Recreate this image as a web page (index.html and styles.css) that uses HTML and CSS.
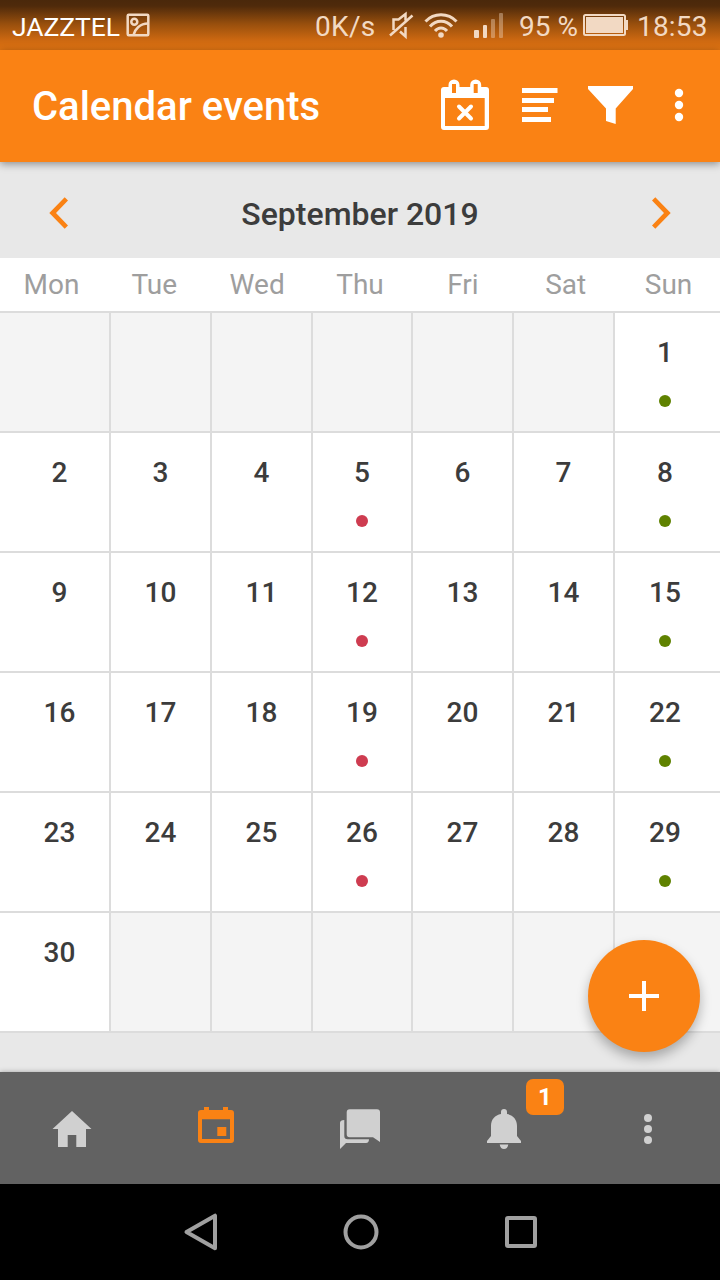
FILE: index.html
```html
<!DOCTYPE html>
<html lang="en">
<head>
    <meta charset="UTF-8">
    <title>Calendar events</title>
    <link rel="stylesheet" href="styles.css">
</head>
<body>
    <div id="container">
        <div id="status">
            <span class="carrier">JAZZTEL</span>
            <svg class="st-pic" width="24" height="24" viewBox="0 0 24 24">
                <rect x="1.7" y="1.7" width="20.6" height="20.6" rx="1"/>
                <circle cx="8.3" cy="8.7" r="3"/>
                <path d="M7.5 22C9 16 14 10.500 22 10.500"/>
            </svg>
            <span class="speed">0K/s</span>
            <svg class="st-mute" width="26" height="28" viewBox="0 0 26 28">
                <path d="M2 24.500L24.500 4.500M5.500 19V8.500H10.500L17.500 3V9.500M17.500 16V25.500L12 20.500"/>
            </svg>
            <svg class="st-wifi" width="36" height="28" viewBox="0 0 36 28">
                <path d="M2.500 10.500C11 1.500 25 1.500 33.500 10.500M7 15.500C13 8.500 23 8.500 29 15.500M12 20C15.500 16 20.500 16 24 20"/>
                <circle cx="18" cy="24" r="2.800"/>
            </svg>
            <svg class="st-signal" width="30" height="26" viewBox="0 0 30 26">
                <rect x="0" y="18" width="5" height="8" rx="1"/>
                <rect x="9" y="13" width="4" height="13" rx="1"/>
                <rect class="off" x="17" y="7" width="4" height="19" rx="1"/>
                <rect class="off" x="25" y="1" width="4" height="25" rx="1"/>
            </svg>
            <span class="percent">95 %</span>
            <svg class="st-battery" width="46" height="22" viewBox="0 0 46 22">
                <rect class="case" x="1" y="1" width="41" height="20" rx="1.500"/>
                <rect x="3" y="3" width="37" height="16"/>
                <rect x="43" y="6" width="2" height="10"/>
            </svg>
            <span class="clock">18:53</span>
        </div>
        <div id="header">
            <h1>Calendar events</h1>
            <svg class="ic-cancel" width="48" height="52" viewBox="0 0 48 52">
                <path fill-rule="evenodd" d="M3 8H7.500V6A5.500 5.500 0 0 1 18.500 6V8H29.200V6A5.500 5.500 0 0 1 40.200 6V8H45A3 3 0 0 1 48 11V48A3 3 0 0 1 45 51H3A3 3 0 0 1 0 48V11A3 3 0 0 1 3 8ZM4 19V47H43.700V19ZM11 5V14H15V5ZM32.700 5V14H36.700V5Z"/>
                <path class="cross" d="M18 27.500L30 39.500M30 27.500L18 39.500"/>
            </svg>
            <svg class="ic-lines" width="36" height="34" viewBox="0 0 36 34">
                <path d="M0 0H35.500V5H0ZM0 10H32V15H0ZM0 19H26V24H0ZM0 29H29V34H0Z"/>
            </svg>
            <svg class="ic-filter" width="46" height="38" viewBox="0 0 46 38">
                <path d="M0 0H45V3L27.700 22.500V38L18 35V22.500L0 3Z"/>
            </svg>
            <svg class="ic-more" width="10" height="34" viewBox="0 0 10 34">
                <circle cx="5" cy="5" r="4.200"/>
                <circle cx="5" cy="17" r="4.200"/>
                <circle cx="5" cy="29" r="4.200"/>
            </svg>
        </div>
        <div id="month">
            <svg width="19" height="32" viewBox="0 0 19 32"><path d="M.3 16L15.700 .3L19 3.600L7 16L19 28.400L15.700 31.700Z"/></svg>
            <h2>September 2019</h2>
            <svg width="19" height="32" viewBox="0 0 19 32"><path d="M18.700 16L3.300 .3L0 3.600L12 16L0 28.400L3.300 31.700Z"/></svg>
        </div>
        <ul id="week">
            <li>Mon</li>
            <li>Tue</li>
            <li>Wed</li>
            <li>Thu</li>
            <li>Fri</li>
            <li>Sat</li>
            <li>Sun</li>
        </ul>
        <ul id="days">
            <li class="empty"></li>
            <li class="empty"></li>
            <li class="empty"></li>
            <li class="empty"></li>
            <li class="empty"></li>
            <li class="empty"></li>
            <li>1<i class="green"></i></li>
            <li>2</li>
            <li>3</li>
            <li>4</li>
            <li>5<i class="red"></i></li>
            <li>6</li>
            <li>7</li>
            <li>8<i class="green"></i></li>
            <li>9</li>
            <li>10</li>
            <li>11</li>
            <li>12<i class="red"></i></li>
            <li>13</li>
            <li>14</li>
            <li>15<i class="green"></i></li>
            <li>16</li>
            <li>17</li>
            <li>18</li>
            <li>19<i class="red"></i></li>
            <li>20</li>
            <li>21</li>
            <li>22<i class="green"></i></li>
            <li>23</li>
            <li>24</li>
            <li>25</li>
            <li>26<i class="red"></i></li>
            <li>27</li>
            <li>28</li>
            <li>29<i class="green"></i></li>
            <li>30</li>
            <li class="empty"></li>
            <li class="empty"></li>
            <li class="empty"></li>
            <li class="empty"></li>
            <li class="empty"></li>
            <li class="empty"></li>
        </ul>
        <div id="add">
            <svg width="30" height="30" viewBox="0 0 30 30"><path d="M13 0H17V13H30V17H17V30H13V17H0V13H13Z"/></svg>
        </div>
        <ul id="tabs">
            <li>
                <svg width="40" height="42" viewBox="0 0 40 42"><path d="M20 3L39.500 21H34V39H24.300V27H15.700V39H6V21H.5Z"/></svg>
            </li>
            <li class="active">
                <svg width="36" height="42" viewBox="0 0 36 42"><path fill-rule="evenodd" d="M6 -1H11V2H25V-1H30V2H33A3 3 0 0 1 36 5V32A3 3 0 0 1 33 35H3A3 3 0 0 1 0 32V5A3 3 0 0 1 3 2H6ZM4 11.300V31H32V11.300ZM19.300 19H28.300V28H19.300Z"/></svg>
            </li>
            <li>
                <svg width="40" height="42" viewBox="0 0 40 42"><path d="M9.700 1.300H37A3 3 0 0 1 40 4.300V34L33 29.300H9.700A3 3 0 0 1 6.700 26.300V4.300A3 3 0 0 1 9.700 1.300ZM4.300 12V28Q4.300 31.300 7.600 31.300H29Q29 35 26 35H6L0 41V15Q0 12 4.300 12Z"/></svg>
            </li>
            <li>
                <svg width="34" height="42" viewBox="0 0 34 42"><path d="M14 6V4A3 3 0 0 1 20 4V6C26 7 30 11.500 30 18V28L34 33V35H0V33L4 28V18C4 11.500 8 7 14 6ZM12.700 36.500H21.300Q20.500 41 17 41Q13.500 41 12.700 36.500Z"/></svg>
                <span class="badge">1</span>
            </li>
            <li>
                <svg width="10" height="42" viewBox="0 0 10 42"><circle cx="5" cy="10" r="4"/><circle cx="5" cy="21" r="4"/><circle cx="5" cy="32" r="4"/></svg>
            </li>
        </ul>
        <div id="sysnav">
            <svg width="36" height="40" viewBox="0 0 36 40"><path d="M3.500 20L32 3.700V36.300Z"/></svg>
            <svg width="36" height="40" viewBox="0 0 36 40"><circle cx="18" cy="20" r="15.500"/></svg>
            <svg width="36" height="40" viewBox="0 0 36 40"><rect x="4" y="6" width="28" height="28" rx="1"/></svg>
        </div>
    </div>
</body>
</html>
```
FILE: styles.css
```css
*{
    padding: 0;
    margin: 0;
    box-sizing: border-box;
}
ul{
    list-style: none;
}
svg{
    display: block;
    flex: none;
    overflow: visible;
}
#container{
    width: 720px;
    height: 1280px;
    display: flex;
    flex-direction: column;
    position: relative;
    overflow: hidden;
    background: #e8e8e8;
    font-family: Roboto, "Liberation Sans", sans-serif;
}
/* status bar */
#status{
    height: 50px;
    padding-left: 12px;
    display: flex;
    align-items: center;
    background: linear-gradient(#4a280b 0, #4f2a0b 12%, #984f0d 48%, #cc6811 80%, #e07413 100%);
    color: #f2d9c3;
    font-size: 28px;
    line-height: 50px;
    white-space: nowrap;
}
#status span{
    flex: none;
    padding-top: 3px;
}
#status svg{
    fill: #f2d9c3;
}
#status .carrier{
    width: 114px;
    color: #fff;
    font-size: 26.5px;
    letter-spacing: -0.1px;
}
#status .st-pic,#status .st-mute{
    fill: none;
    stroke: #f2d9c3;
    stroke-width: 2.5;
}
#status .speed{
    width: 72px;
    margin-left: 165px;
    letter-spacing: 0.3px;
}
#status .st-mute{
    margin-left: 1px;
}
.st-wifi{
    margin-left: 9px;
}
.st-wifi path{
    fill: none;
    stroke: #f2d9c3;
    stroke-width: 3;
}
.st-signal{
    margin-left: 15px;
}
.st-signal .off{
    opacity: 0.4;
}
#status .percent{
    width: 64px;
    margin-left: 15px;
}
.st-battery .case{
    fill: none;
    stroke: #f2d9c3;
    stroke-width: 2;
}
#status .clock{
    margin-left: 8px;
    letter-spacing: 0.2px;
}
/* title bar */
#header{
    height: 112px;
    padding-left: 32px;
    display: flex;
    align-items: center;
    background: #fa8214;
    box-shadow: 0 2px 8px rgba(0,0,0,0.4);
    fill: #fff;
}
#header h1{
    width: 409px;
    color: #fff;
    font-size: 40px;
    font-weight: 500;
}
#header svg{
    margin-bottom: 2px;
}
.ic-cancel .cross{
    stroke: #fff;
    stroke-width: 4;
    stroke-linecap: round;
}
.ic-lines{
    margin: 0 30px 0 33px;
}
.ic-more{
    margin-left: 40px;
}
/* month switch */
#month{
    height: 96px;
    padding: 6px 49px 0;
    display: flex;
    align-items: center;
    justify-content: space-between;
    fill: #fa8214;
}
#month h2{
    padding-top: 2px;
    color: #3c3c3c;
    font-size: 32px;
    font-weight: 500;
}
#week{
    height: 53px;
    display: flex;
    background: #fff;
    color: #9e9e9e;
    font-size: 28px;
    line-height: 53px;
    text-align: center;
}
#week li{
    flex: 1;
}
#days{
    display: grid;
    grid-template-columns: 111px 101px 101px 100px 101px 101px 105px;
    grid-auto-rows: 120px;
    border-top: 2px solid #dcdcdc;
    color: #3c3c3c;
    font-size: 28px;
    font-weight: 500;
    line-height: 34px;
    text-align: center;
}
#days li{
    padding-top: 23px;
    background: #fff;
    border-right: 2px solid #dcdcdc;
    border-bottom: 2px solid #dcdcdc;
}
#days li:nth-child(7n+1){
    padding-left: 10px;
}
#days li:nth-child(7n){
    padding-right: 5px;
    border-right: 0;
}
#days .empty{
    background: #f4f4f4;
}
#days i{
    display: block;
    width: 12px;
    height: 12px;
    margin: 25px auto 0;
    border-radius: 6px;
}
#days .red{
    background: #ce3c50;
}
#days .green{
    background: #5f8200;
}
/* round button over the grid */
#add{
    width: 112px;
    height: 112px;
    position: absolute;
    left: 588px;
    top: 940px;
    display: flex;
    align-items: center;
    justify-content: center;
    border-radius: 50%;
    background: #fa8214;
    box-shadow: 0 6px 12px rgba(0,0,0,0.28);
    fill: #fff;
}
/* bottom tabs */
#tabs{
    height: 112px;
    margin-top: auto;
    display: flex;
    background: #626262;
    box-shadow: 0 0 5px rgba(0,0,0,0.3);
    fill: #d0d0d0;
    z-index: 1;
}
#tabs li{
    flex: 1;
    display: flex;
    align-items: center;
    justify-content: center;
    padding-top: 2px;
    position: relative;
}
#tabs .active{
    fill: #fa8214;
}
.badge{
    width: 38px;
    height: 36px;
    position: absolute;
    left: 94px;
    top: 7px;
    border-radius: 7px;
    background: #fa8214;
    color: #fff;
    font-size: 24px;
    font-weight: bold;
    line-height: 36px;
    text-align: center;
}
#sysnav{
    height: 96px;
    padding: 0 181px 0 183px;
    display: flex;
    align-items: center;
    justify-content: space-between;
    background: #000;
    fill: none;
    stroke: #a0a0a0;
    stroke-width: 4;
    stroke-linejoin: round;
    z-index: 1;
}
```
